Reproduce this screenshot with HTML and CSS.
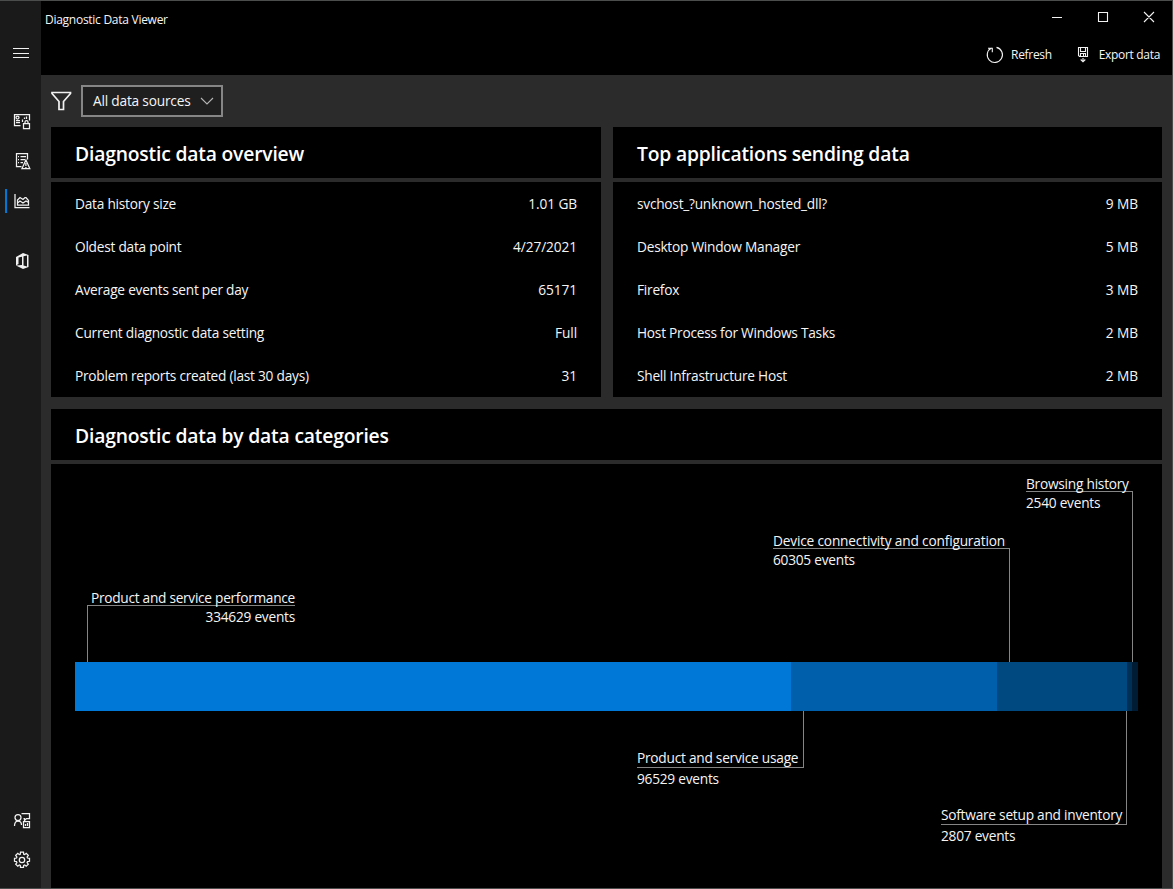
FILE: index.html
```html
<!DOCTYPE html>
<html lang="en">
<head>
<meta charset="utf-8">
<title>Diagnostic Data Viewer</title>
<link rel="stylesheet" href="styles.css">
</head>
<body>
<div class="window">
  <nav class="sidebar">
    <div class="nav-item nav-menu"><svg width="18" height="18" viewBox="0 0 18 18"><path d="M1 4.500h16M1 9.500h16M1 13.500h16"/></svg></div>
    <div class="nav-item nav-data"><svg width="18" height="18" viewBox="0 0 18 18"><path d="M7.500 12.500h-6v-11h15v6M3 9.500h4M3 7.500h4M9.500 9V6.500M11.500 6V4.500M13.500 6V3.500M10.500 10.500h6v5h-6zM12 10.500V9a1.500 1.500 0 0 1 3 0v1.500"/><circle cx="4.500" cy="4.500" r="1.500"/></svg></div>
    <div class="nav-item nav-report"><svg width="18" height="18" viewBox="0 0 18 18"><path d="M7.500 14.500h-5v-13h11v6M4 4.500h1M6.500 4.500H12M4 7.500h1M6.500 7.500H11M4 10.500h1M6.500 10.500H9M8 16.500L11.900 8L15.800 16.500zM11.900 11v3M11.900 15v1"/></svg></div>
    <div class="nav-item nav-overview active"><svg width="18" height="18" viewBox="0 0 18 18"><path d="M2 2v13.500h14.500M4.500 8l2.500-2.500 3 2 2-2h1l2.500 3v4.500h-11zM4.500 11l2.500-2 3 2 3-2 2.500 1.500"/></svg></div>
    <div class="nav-item nav-office"><svg width="18" height="18" viewBox="0 0 18 18"><path class="solid" fill-rule="evenodd" d="M2 5L9 1l5.500 2v12L9 17l-7-3.500 6-.5V4.700L4.500 5.500v6.500L2 13.500zM9.500 4.200v9.300l3.500 1V3.500z"/></svg></div>
    <div class="nav-item nav-feedback"><svg width="18" height="18" viewBox="0 0 18 18"><circle cx="5" cy="5.500" r="3"/><path d="M1.500 14c0-3.500 1.500-5 3.500-5s3.500 1.500 3.500 4M8.500 1.500h8v5h-3l-2 2v-2h-1M10.500 9.500h6v6h-6zM12.500 14v-2M14.500 14v-3"/></svg></div>
    <div class="nav-item nav-settings"><svg width="18" height="18" viewBox="0 0 18 18"><path d="M7.300 3.200L7.500 1.200h3l.2 2 1 .4 1.500-1.300 2.100 2.100-1.200 1.600.4 1 2 .3v3l-2 .3-.4 1 1.200 1.500-2.100 2.100-1.500-1.200-1 .4-.2 2h-3l-.2-2-1-.4-1.500 1.200-2.100-2.100 1.200-1.500-.4-1-2-.3v-3l2-.3.4-1-1.200-1.600 2.100-2.100 1.500 1.300z"/><circle cx="9" cy="9" r="2.700"/></svg></div>
  </nav>
  <div class="content">
    <header class="titlebar">
      <div class="title-row">
        <span class="app-title">Diagnostic Data Viewer</span>
        <svg class="window-controls" width="104" height="14" viewBox="0 0 104 14"><path d="M1 7.500h10M47.500 2.500h9v9h-9zM93 2l10 10M103 2L93 12"/></svg>
      </div>
      <div class="actions">
        <div class="action refresh"><svg width="18" height="18" viewBox="0 0 18 18"><path d="M5.500 2a7.600 7.600 0 1 0 5-.6M2 2.200h4.300v4"/></svg><span>Refresh</span></div>
        <div class="action export"><svg width="12" height="18" viewBox="0 0 12 18"><path d="M1.500 1.500h9v9h-8l-1-1zM3.500 1.500v4h5v-4M3.500 10.500v-3h5v3M6.500 8v2M6 12v4M3.700 13.500L6 15.800l2.300-2.300"/></svg><span>Export data</span></div>
      </div>
    </header>
    <main class="page">
      <div class="filter-row">
        <svg class="funnel" width="21" height="20" viewBox="0 0 21 20"><path d="M1 1.500h18.500v1L12.500 10.500v8h-4.500v-8L1 2.500z"/></svg>
        <div class="source-select"><span>All data sources</span><svg width="14" height="8" viewBox="0 0 14 8"><path d="M1 1l6 6 6-6"/></svg></div>
      </div>
      <div class="panels">
        <section class="panel">
          <h2>Diagnostic data overview</h2>
          <div class="rows">
            <div class="row"><span>Data history size</span><span>1.01 GB</span></div>
            <div class="row"><span>Oldest data point</span><span>4/27/2021</span></div>
            <div class="row"><span>Average events sent per day</span><span>65171</span></div>
            <div class="row"><span>Current diagnostic data setting</span><span>Full</span></div>
            <div class="row"><span>Problem reports created (last 30 days)</span><span>31</span></div>
          </div>
        </section>
        <section class="panel">
          <h2>Top applications sending data</h2>
          <div class="rows">
            <div class="row"><span>svchost_?unknown_hosted_dll?</span><span>9 MB</span></div>
            <div class="row"><span>Desktop Window Manager</span><span>5 MB</span></div>
            <div class="row"><span>Firefox</span><span>3 MB</span></div>
            <div class="row"><span>Host Process for Windows Tasks</span><span>2 MB</span></div>
            <div class="row"><span>Shell Infrastructure Host</span><span>2 MB</span></div>
          </div>
        </section>
      </div>
      <section class="panel categories">
        <h2>Diagnostic data by data categories</h2>
        <div class="chart">
          <div class="bar"><i class="seg performance"></i><i class="seg usage"></i><i class="seg device"></i><i class="seg software"></i><i class="seg browsing"></i></div>
          <div class="callout above c-performance"><div class="name">Product and service performance</div><div class="count">334629 events</div></div>
          <div class="callout below c-usage"><div class="name">Product and service usage</div><div class="count">96529 events</div></div>
          <div class="callout above c-device"><div class="name">Device connectivity and configuration</div><div class="count">60305 events</div></div>
          <div class="callout below c-software"><div class="name">Software setup and inventory</div><div class="count">2807 events</div></div>
          <div class="callout above c-browsing"><div class="name">Browsing history</div><div class="count">2540 events</div></div>
        </div>
      </section>
    </main>
  </div>
</div>
</body>
</html>
```
FILE: styles.css
```css
* { box-sizing: border-box; }
body { margin: 0; background: #000; color: #f5f5f5; font: 13.7px/20px "Open Sans", "Noto Sans", sans-serif; letter-spacing: -0.24px; }
svg { display: block; fill: none; stroke: #f2f2f2; stroke-width: 1.1; flex: none; }
.solid { fill: #f2f2f2; stroke: none; }

.window { display: flex; width: 1173px; height: 889px; border: solid #4b4d4d; border-width: 1px 1px 1px 0; overflow: hidden; }
.sidebar { width: 41px; flex: none; background: #1a1a1a; display: flex; flex-direction: column; padding-top: 32px; }
.sidebar svg { stroke-width: 1.25; }
.nav-item { height: 40px; flex: none; display: flex; align-items: center; padding-left: 13px; }
.nav-menu { padding-left: 12px; margin-bottom: 28px; }
.nav-menu svg { stroke-width: 1; }
.nav-data { padding-top: 2px; }
.nav-report, .nav-office { padding-left: 14px; }
.nav-overview { padding-left: 8px; }
.nav-overview::before { content: ""; width: 2px; height: 24px; margin: 0 6px 0 -3px; background: #0078d7; }
.nav-office { margin-top: 20px; }
.nav-feedback { margin-top: auto; }
.nav-settings { margin-bottom: 7px; padding-bottom: 2px; }

.content { flex: 1; display: flex; flex-direction: column; min-width: 0; }
.titlebar { height: 74px; background: #000; flex: none; font-size: 12px; letter-spacing: -0.27px; }
.title-row { height: 34px; display: flex; justify-content: space-between; padding: 9px 17px 0 4px; }
.actions { display: flex; justify-content: flex-end; height: 40px; align-items: center; padding-right: 12px; letter-spacing: -0.32px; }
.action { display: flex; align-items: center; }
.refresh { gap: 7px; margin-right: 25px; }
.export { gap: 10px; }

.page { flex: 1; background: #2b2b2b; padding: 0 10px; display: flex; flex-direction: column; min-height: 0; }
.filter-row { height: 52px; display: flex; align-items: center; gap: 9px; flex: none; }
.funnel { stroke-width: 1.7; }
.source-select { width: 142px; height: 32px; border: 2px solid #868686; background: #1f1f1f; display: flex; align-items: center; justify-content: space-between; padding: 0 7px 0 10px; }
.source-select span { letter-spacing: -0.2px; }
.source-select svg { stroke: #b5b5b5; }
.panels { display: grid; grid-template-columns: 550px 549px; gap: 12px; flex: none; }
h2 { margin: 0 0 4px; height: 51px; padding: 1px 24px 0; background: #000; color: #fff; font-size: 19.3px; line-height: 52px; font-weight: 600; letter-spacing: -0.18px; }
.rows { background: #000; height: 215px; padding: 0 24px; }
.row { display: flex; justify-content: space-between; line-height: 43px; height: 43px; }
.row span + span { letter-spacing: -0.1px; }
.categories { margin-top: 12px; flex: 1; display: flex; flex-direction: column; }
.categories h2 { flex: none; }

.chart { flex: 1; background: #000; position: relative; padding: 198px 24px 0; }
.bar { display: flex; height: 49px; }
.seg { display: block; }
.performance { width: 716px; background: #0078d7; }
.usage { width: 206px; background: #005faa; }
.device { width: 130px; background: #004880; }
.software { width: 5px; background: #003056; }
.browsing { width: 6px; background: #001c34; }

/* Callout labels with leader lines to their bar segment */
.callout { position: absolute; white-space: nowrap; }
.callout .name { border-bottom: 1px solid #858585; height: 20px; line-height: 23px; }
.callout .count { line-height: 21px; }
.callout::after { content: ""; position: absolute; right: 0; width: 1px; background: #858585; }
.above::after { top: 19px; bottom: 0; }
.below .name { line-height: 20px; }
.c-performance { left: 36px; top: 122px; width: 208px; height: 76px; }
.c-performance .name { padding-left: 4px; letter-spacing: -0.28px; }
.c-performance .count { text-align: right; }
.c-performance::after { left: 0; right: auto; }
.c-usage { left: 586px; top: 284px; width: 167px; }
.c-usage::after { top: -37px; height: 57px; }
.c-device { left: 722px; top: 65px; width: 237px; height: 133px; }
.c-device .name { letter-spacing: -0.18px; }
.c-software { left: 890px; top: 341px; width: 186px; }
.c-software::after { top: -94px; height: 114px; }
.c-browsing { left: 975px; top: 8px; width: 107px; height: 190px; }
```
